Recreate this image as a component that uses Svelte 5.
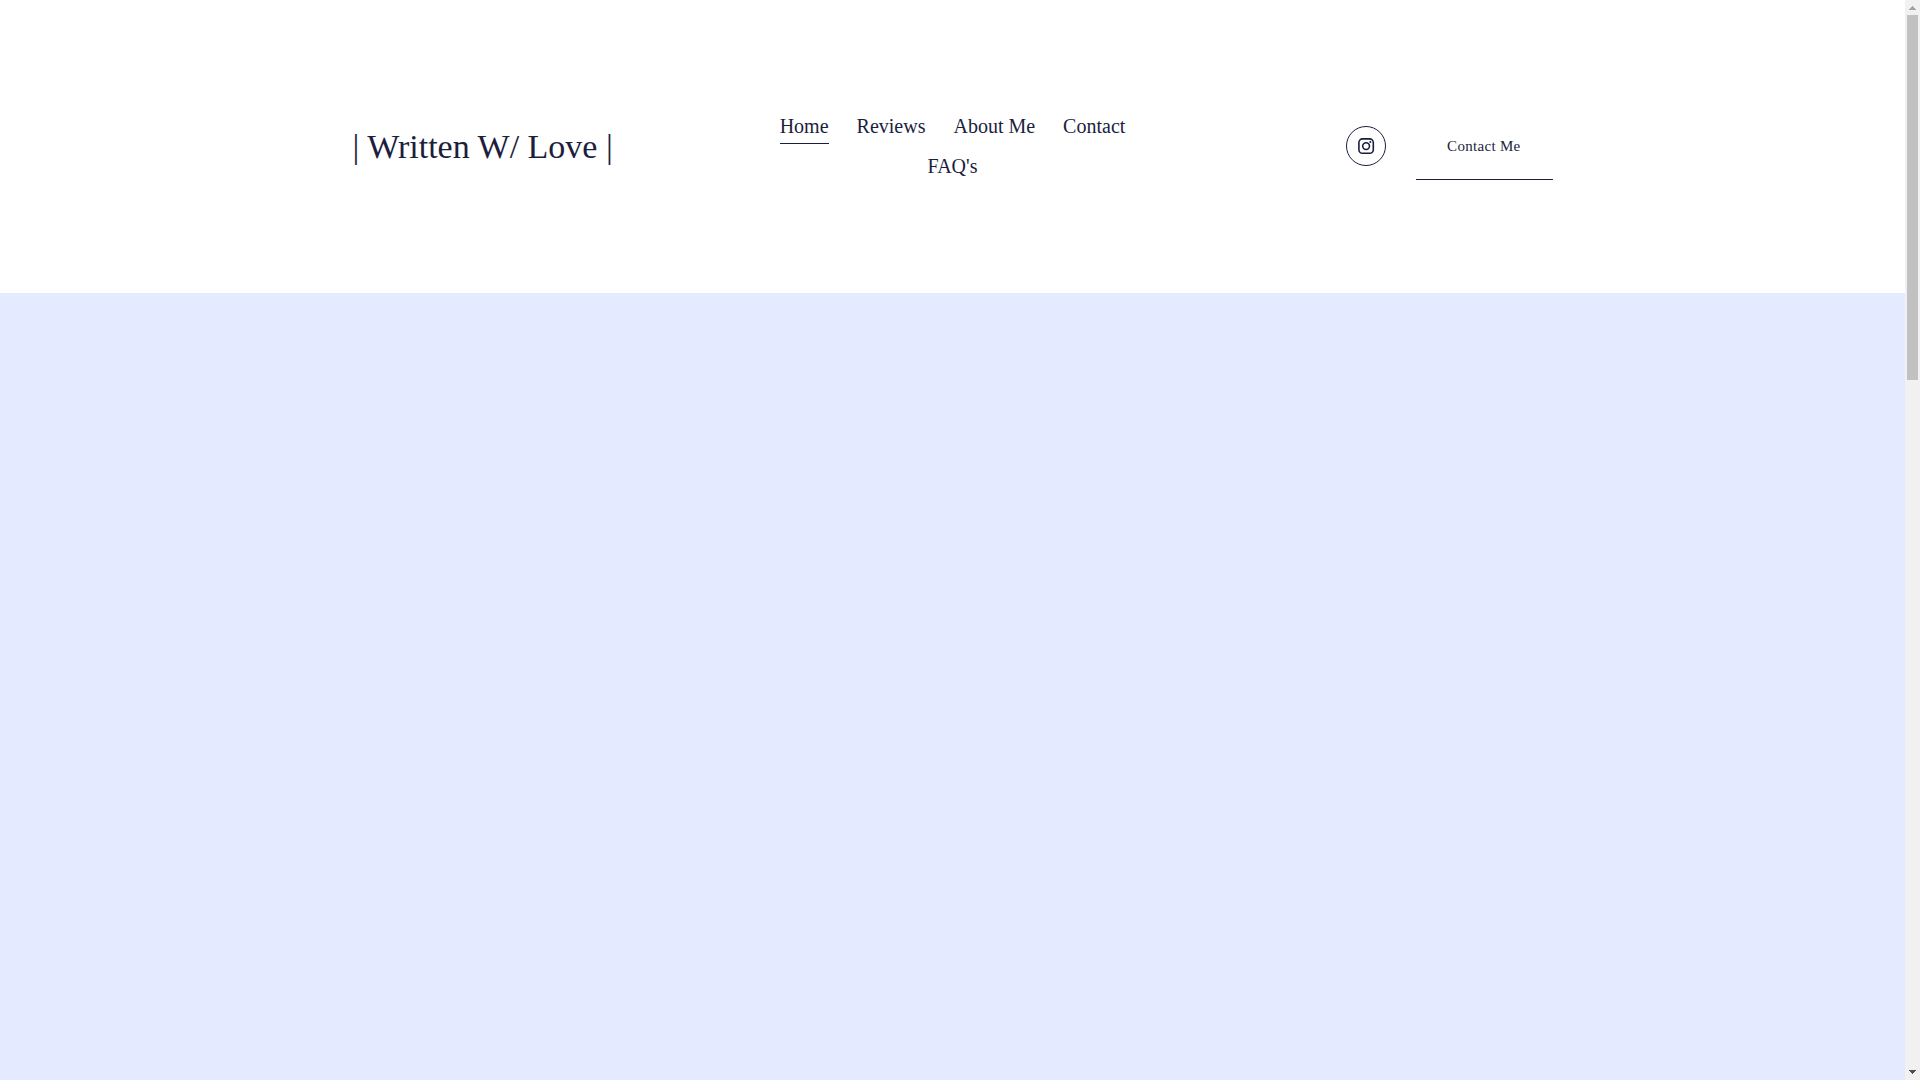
<script>
  const links = [
    { label: "Home", href: "#home" },
    { label: "Reviews", href: "#reviews" },
    { label: "About Me", href: "#about-me" },
    { label: "Contact", href: "#contact" },
    { label: "FAQ's", href: "#faqs" },
  ];

  let current = $state("Home");
</script>

<div class="window">
  <div class="page">
    <header class="header">
      <div class="header-inner">
        <a class="site-title" href="#home">| Written W/ Love |</a>

        <nav class="nav">
          {#each links as link (link.label)}
            <a
              class="nav-link"
              class:active={current === link.label}
              href={link.href}
              onclick={() => (current = link.label)}
            >
              {link.label}
            </a>
          {/each}
        </nav>

        <div class="actions">
          <a class="social" href="#instagram" aria-label="Instagram">
            <svg viewBox="0 0 40 40" width="40" height="40">
              <circle class="ring" cx="20" cy="20" r="19.5" />
              <rect x="12.9" y="12.9" width="14.4" height="14.4" rx="3.6" />
              <circle cx="20.1" cy="20.1" r="3.4" />
              <circle class="dot" cx="24.3" cy="15.9" r="1" />
            </svg>
          </a>
          <a class="cta" href="#contact">Contact Me</a>
        </div>
      </div>
    </header>

    <main class="hero"></main>
  </div>

  <div class="scrollbar" aria-hidden="true">
    <svg class="arrow up" viewBox="0 0 15 15">
      <path d="M7 6h1v1h1v1h1v1h1v1H4V9h1V8h1V7h1z" />
    </svg>
    <div class="rail">
      <div class="thumb"></div>
    </div>
    <svg class="arrow" viewBox="0 0 15 15">
      <path d="M4 5h7v1h-1v1H9v1H8v1H7V8H6V7H5V6H4z" />
    </svg>
  </div>
</div>

<style>
  :global(body) {
    margin: 0;
  }
  .window {
    --ink: #1b1e3d;
    display: flex;
    height: 100vh;
    overflow: hidden;
    color: var(--ink);
    font-family: "Liberation Serif", serif;
  }
  .page {
    flex: 1;
    display: flex;
    flex-direction: column;
  }
  .header {
    padding: 106px 48px 107px;
    background: #fff;
  }
  .header-inner {
    max-width: 1200px;
    min-height: 80px;
    margin: 0 auto;
    display: grid;
    grid-template-columns: 1fr 360px 1fr;
    align-items: center;
  }
  a {
    color: inherit;
    text-decoration: none;
  }
  .site-title {
    padding-top: 2px;
    font-size: 34px;
    line-height: 40px;
    white-space: nowrap;
  }
  .nav {
    display: flex;
    flex-wrap: wrap;
    justify-content: center;
    column-gap: 28px;
  }
  .nav-link {
    padding-top: 3px;
    margin-bottom: 2px;
    border-bottom: 1px solid transparent;
    font-size: 20px;
    line-height: 34px;
  }
  .nav-link.active {
    border-color: currentColor;
  }
  .actions {
    display: flex;
    align-items: center;
    justify-content: flex-end;
    gap: 30px;
  }
  .social,
  .social svg {
    display: block;
  }
  .social svg {
    fill: none;
    stroke: currentColor;
    stroke-width: 1.6;
  }
  .social .ring {
    stroke-width: 1;
  }
  .social .dot {
    fill: currentColor;
    stroke: none;
  }
  .cta {
    padding: 25px 32px 24px 31px;
    border-bottom: 1px solid currentColor;
    font-size: 15px;
    line-height: 18px;
    letter-spacing: 0.02em;
  }
  .hero {
    flex: 1;
    background: #e4eaff;
  }
  .scrollbar {
    width: 15px;
    display: flex;
    flex-direction: column;
    background: #f1f1f1;
  }
  .arrow {
    height: 15px;
    fill: #505050;
  }
  .arrow.up {
    fill: #a3a3a3;
  }
  .rail {
    flex: 1;
    padding: 0 2px;
  }
  .thumb {
    height: 34.8%;
    background: #c1c1c1;
  }
</style>
